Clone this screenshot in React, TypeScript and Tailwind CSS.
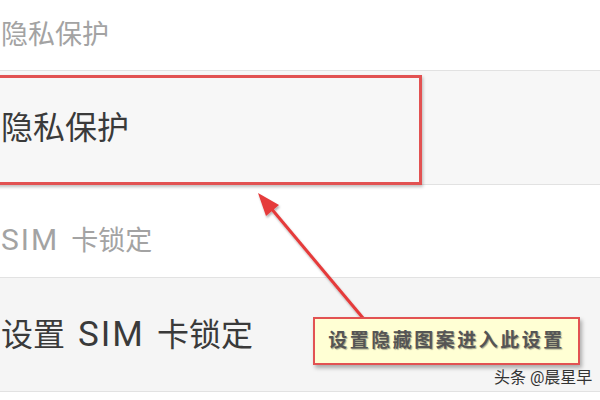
import React from "react";

const cjk = { fontFamily: 'Roboto, "Noto Sans CJK SC", "Noto Sans", sans-serif' };

function Row({ children, big, bg }: { children: React.ReactNode; big?: boolean; bg: string }) {
  return (
    <div
      className={`flex items-center border-b border-[#e2e2e2] ${bg} ${
        big ? "h-[114px] text-[32px] text-[#3a3a3a]" : "text-[27px] text-[#a3a3a3]"
      }`}
    >
      <span className="pl-[1px] leading-none">{children}</span>
    </div>
  );
}

export default function App() {
  return (
    <div className="relative w-[600px] h-[400px] overflow-hidden bg-white" style={cjk}>
      {/* settings list */}
      <div className="flex flex-col">
        <Row bg="bg-white h-[71px] pt-[1px]">隐私保护</Row>
        <Row big bg="bg-[#f7f7f7]">
          隐私保护
        </Row>
        <Row bg="bg-white h-[93px] pt-[18px]">
          <span className="text-[30px] tracking-[2px]">SIM</span>
          <span className="ml-[12px]">卡锁定</span>
        </Row>
        <Row big bg="bg-[#f5f5f5]">
          设置
          <span className="ml-[13px] text-[35px] tracking-[2px]">SIM</span>
          <span className="ml-[12px]">卡锁定</span>
        </Row>
      </div>

      {/* highlight box */}
      <div className="absolute left-[-6px] top-[75px] h-[110px] w-[428px] border-[3px] border-[#e25252] shadow-[1px_2px_3px_rgba(0,0,0,0.25)]" />

      {/* arrow */}
      <svg className="absolute inset-0" width="600" height="400">
        <defs>
          <filter id="sh" x="-20%" y="-20%" width="140%" height="140%">
            <feDropShadow dx="1" dy="2" stdDeviation="1.2" floodColor="#000" floodOpacity="0.3" />
          </filter>
        </defs>
        <g filter="url(#sh)">
          <line x1="363" y1="318" x2="270" y2="207" stroke="#e53a3a" strokeWidth="3" />
          <polygon points="258,193 279,205 266,216" fill="#e53a3a" />
        </g>
      </svg>

      {/* callout */}
      <div className="absolute left-[313px] top-[317px] flex h-[48px] w-[267px] items-center justify-center border-2 border-[#e25252] bg-[#ffffd4] shadow-[2px_3px_4px_rgba(0,0,0,0.3)]">
        <span className="text-[19px] font-bold tracking-[2.5px] text-[#555] [text-shadow:1px_1px_1px_rgba(0,0,0,0.35)]">
          设置隐藏图案进入此设置
        </span>
      </div>

      {/* watermark */}
      <div className="absolute left-[494px] top-[370px] text-[16px] leading-none text-[#333]">
        头条 @晨星早
      </div>
    </div>
  );
}
